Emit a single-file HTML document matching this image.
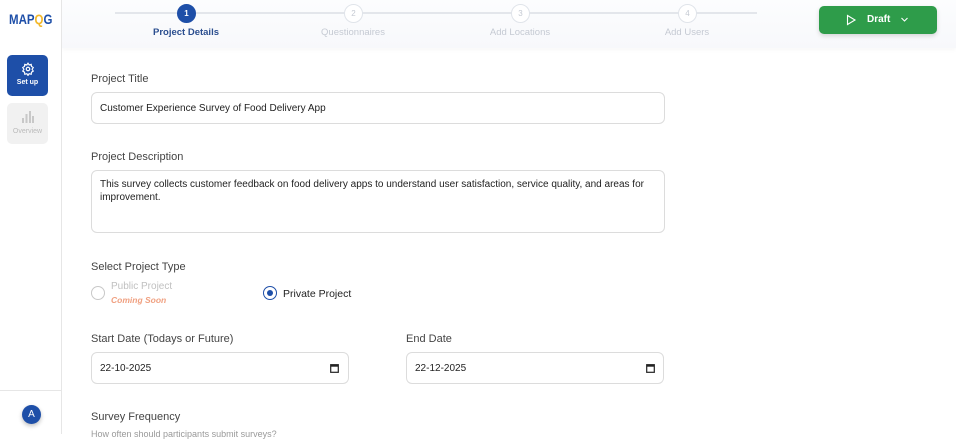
<!DOCTYPE html>
<html><head><style>
*{box-sizing:border-box;margin:0;padding:0}
body{width:956px;height:434px;overflow:hidden;background:#fff;font-family:"Liberation Sans",sans-serif;position:relative;color:#222}
.side{position:absolute;left:0;top:0;width:62px;height:434px;border-right:1px solid #e6e6e6;background:#fff}
.abs{position:absolute}
.lbl{position:absolute;font-size:11px;color:#444}
.inp{position:absolute;border:1px solid #dcdcdc;border-radius:6px;font-size:10px;color:#222;padding:0 8px;background:#fff}
.step{position:absolute;width:19px;height:19px;border-radius:50%;border:1px solid #e0e4ea;background:#fff;color:#c5cad3;font-size:8px;text-align:center;line-height:17px;top:4px}
.sl{position:absolute;top:27px;font-size:9.5px;color:#c5cad3;width:120px;text-align:center}
</style></head><body>
<div class="abs" style="left:62px;top:0;width:894px;height:48px;background:linear-gradient(#fcfdfe,#f7f8fb);box-shadow:0 2px 4px rgba(0,0,0,0.03)"></div>
<div class="abs" style="left:115px;top:12px;width:642px;height:2px;background:#e3e6eb"></div>
<div class="step" style="left:177px;background:#1e4fa8;border-color:#1e4fa8;color:#fff;font-weight:bold">1</div>
<div class="step" style="left:344px">2</div>
<div class="step" style="left:511px">3</div>
<div class="step" style="left:678px">4</div>
<div class="sl" style="left:126px;color:#2b4e8f;font-weight:bold">Project Details</div>
<div class="sl" style="left:293px">Questionnaires</div>
<div class="sl" style="left:460px">Add Locations</div>
<div class="sl" style="left:627px">Add Users</div>
<div class="abs" style="left:819px;top:6px;width:118px;height:28px;border-radius:5px;background:#2e9c4a;box-shadow:0 2px 5px rgba(0,0,0,0.15);color:#fff;font-size:10px;font-weight:bold">
<svg class="abs" style="left:26px;top:8px" width="12" height="12" viewBox="0 0 12 12"><path d="M2.5 1.5L10 6 2.5 10.5Z" fill="none" stroke="#fff" stroke-width="1.1"/></svg>
<span class="abs" style="left:48px;top:8px">Draft</span>
<svg class="abs" style="left:81px;top:10px" width="9" height="7" viewBox="0 0 9 7"><path d="M1.5 2L4.5 5 7.5 2" fill="none" stroke="#fff" stroke-width="1.1"/></svg>
</div>
<div class="side">
<div class="abs" style="left:9px;top:11px;font-size:14px;font-weight:bold;color:#1e4fa8;transform:scaleX(0.82);transform-origin:left">MAP<span style="color:#f2b82b">Q</span>G</div>
<div class="abs" style="left:7px;top:55px;width:41px;height:41px;border-radius:5px;background:#1e4fa8;color:#fff;font-size:7px;font-weight:bold;text-align:center">
<svg style="margin-top:7px" width="14" height="14" viewBox="0 0 24 24" fill="none" stroke="#fff" stroke-width="2"><circle cx="12" cy="12" r="3"/><path d="M12 2l2 3 3.5-1 .5 3.5 3 2-2 3 2 3-3 2-.5 3.5-3.5-1-2 3-2-3-3.5 1-.5-3.5-3-2 2-3-2-3 3-2 .5-3.5 3.5 1z"/></svg>
<div style="margin-top:1px">Set up</div></div>
<div class="abs" style="left:7px;top:103px;width:41px;height:41px;border-radius:5px;background:#f1f1f1;color:#bbb;font-size:7px;text-align:center">
<svg style="margin-top:7px" width="14" height="14" viewBox="0 0 14 14" fill="#c8c8c8"><rect x="1" y="8" width="2" height="5"/><rect x="4.5" y="4" width="2" height="9"/><rect x="8" y="1" width="2" height="12"/><rect x="11" y="6" width="2" height="7"/></svg>
<div style="margin-top:2px">Overview</div></div>
<div class="abs" style="left:0;top:390px;width:61px;height:1px;background:#e6e6e6"></div>
<div class="abs" style="left:22px;top:405px;width:19px;height:19px;border-radius:50%;background:#1e4fa8;color:#fff;font-size:10px;text-align:center;line-height:19px;box-shadow:0 2px 4px rgba(0,0,0,0.25)">A</div>
</div>
<div class="lbl" style="left:91px;top:73px">Project Title</div>
<div class="inp" style="left:91px;top:92px;width:574px;height:32px;line-height:32px">Customer Experience Survey of Food Delivery App</div>
<div class="lbl" style="left:91px;top:151px">Project Description</div>
<div class="inp" style="left:91px;top:170px;width:574px;height:63px;padding-top:8px;line-height:12.5px">This survey collects customer feedback on food delivery apps to understand user satisfaction, service quality, and areas for improvement.</div>
<div class="lbl" style="left:91px;top:261px">Select Project Type</div>
<div class="abs" style="left:91px;top:286px;width:14px;height:14px;border-radius:50%;border:1px solid #c8c8c8"></div>
<div class="abs" style="left:111px;top:281px;font-size:10px;color:#c0c0c0">Public Project</div>
<div class="abs" style="left:111px;top:295px;font-size:8.5px;color:#f0a080;font-style:italic;font-weight:bold">Coming Soon</div>
<div class="abs" style="left:263px;top:286px;width:14px;height:14px;border-radius:50%;border:1.5px solid #1e4fa8"><div style="margin:2.5px;width:6px;height:6px;border-radius:50%;background:#1e4fa8"></div></div>
<div class="abs" style="left:283px;top:288px;font-size:10.5px;color:#222">Private Project</div>
<div class="lbl" style="left:91px;top:333px">Start Date (Todays or Future)</div>
<div class="lbl" style="left:406px;top:333px">End Date</div>
<div class="inp" style="left:91px;top:352px;width:258px;height:32px;line-height:32px">22-10-2025</div>
<div class="inp" style="left:406px;top:352px;width:258px;height:32px;line-height:32px">22-12-2025</div>
<svg class="abs" style="left:330px;top:363px" width="9" height="10" viewBox="0 0 9 10"><rect x="0.7" y="1.7" width="7.6" height="7.6" fill="none" stroke="#222" stroke-width="1.2"/><rect x="0.7" y="1.7" width="7.6" height="2" fill="#222"/></svg>
<svg class="abs" style="left:646px;top:363px" width="9" height="10" viewBox="0 0 9 10"><rect x="0.7" y="1.7" width="7.6" height="7.6" fill="none" stroke="#222" stroke-width="1.2"/><rect x="0.7" y="1.7" width="7.6" height="2" fill="#222"/></svg>
<div class="lbl" style="left:91px;top:411px">Survey Frequency</div>
<div class="abs" style="left:91px;top:429px;font-size:9px;color:#999">How often should participants submit surveys?</div>
</body></html>
